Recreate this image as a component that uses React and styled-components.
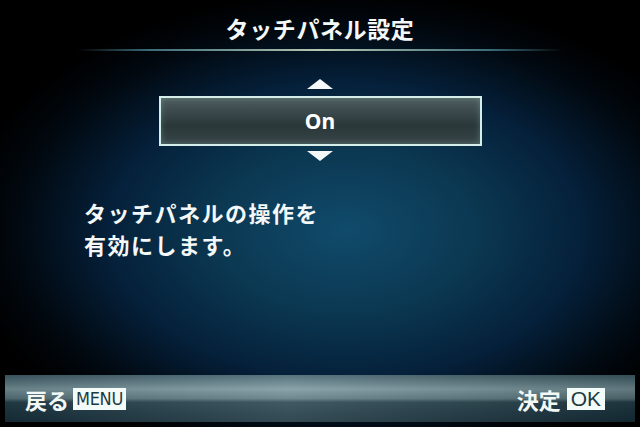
import React from 'react';
import { styled, createGlobalStyle } from 'styled-components';

const GlobalStyle = createGlobalStyle`
  html, body {
    margin: 0;
    padding: 0;
    background: #000;
  }
`;

const font = `'Noto Sans CJK JP', 'Noto Sans', sans-serif`;

const Screen = styled.div`
  width: 640px;
  height: 427px;
  display: flex;
  flex-direction: column;
  overflow: hidden;
  font-family: ${font};
  color: #f4f8f8;
  background:
    radial-gradient(ellipse 60% 56% at 54% 54%, #104b6b 0%, #0b3751 35%, #05203a 62%, #01080f 86%, #000 100%);
`;

const Title = styled.h1`
  margin: 0;
  padding-top: 14px;
  font-size: 23px;
  line-height: 28px;
  font-weight: 700;
  text-align: center;
  letter-spacing: 0.6px;
`;

const Rule = styled.div`
  width: 486px;
  height: 2px;
  margin: 7px auto 0;
  background: linear-gradient(
    90deg,
    rgba(60, 110, 130, 0) 0%,
    #3b6c7a 15%,
    #b8c8b0 50%,
    #3b6c7a 85%,
    rgba(60, 110, 130, 0) 100%
  );
`;

const Selector = styled.div`
  margin-top: 28px;
  display: flex;
  flex-direction: column;
  align-items: center;
`;

const Arrow = styled.svg`
  display: block;
  width: 26px;
  height: 10px;
  margin: ${(p) => (p.$down ? '5px 0 0' : '0 0 7px')};
`;

const ValueBox = styled.div`
  width: 319px;
  height: 46px;
  border: 2px solid #d6eeea;
  display: flex;
  align-items: center;
  justify-content: center;
  background: linear-gradient(
    180deg,
    #4e5c5e 0%,
    #3b494c 30%,
    #2a3739 60%,
    #384548 100%
  );
  box-shadow: inset 0 0 6px rgba(150, 200, 200, 0.35);
`;

const Value = styled.span`
  font-family: 'Noto Sans', 'DejaVu Sans', sans-serif;
  font-size: 21px;
  font-weight: 700;
  color: #ffffff;
`;

const Description = styled.p`
  margin: 35px 0 0;
  padding-left: 84px;
  font-size: 22px;
  line-height: 32px;
  font-weight: 700;
  letter-spacing: 1.5px;
`;

const Spacer = styled.div`
  flex: 1;
`;

const Footer = styled.div`
  margin: 0 5px 5px;
  height: 47px;
  padding: 0 30px 0 20px;
  display: flex;
  align-items: center;
  justify-content: space-between;
  background:
    linear-gradient(90deg, rgba(0, 0, 0, 0.15) 0%, rgba(255, 255, 255, 0.12) 45%, rgba(0, 0, 0, 0.2) 100%),
    linear-gradient(
      180deg,
      #3f5f6a 0%,
      #7a969e 30%,
      #5b7880 50%,
      #26424d 58%,
      #1d3844 80%,
      #17303b 100%
    );
`;

const Action = styled.div`
  display: flex;
  align-items: center;
  gap: ${(p) => p.$gap || 4}px;
  font-size: 22px;
  font-weight: 700;
  color: #f2f8f6;
`;

const Key = styled.span`
  display: inline-flex;
  align-items: center;
  justify-content: center;
  height: 22px;
  padding: 0 ${(p) => (p.$wide ? 3 : 4)}px;
  background: #f2fbf8;
  color: #1c3a40;
  font-family: ${(p) =>
    p.$wide
      ? `'Liberation Sans Narrow', 'DejaVu Sans Condensed', 'Liberation Sans', sans-serif`
      : `'Liberation Sans', sans-serif`};
  font-size: ${(p) => (p.$wide ? 18 : 21)}px;
  font-weight: 400;
  letter-spacing: ${(p) => (p.$wide ? -0.3 : 0)}px;
  line-height: 22px;
`;

export default function App() {
  return (
    <>
      <GlobalStyle />
      <Screen>
        <Title>タッチパネル設定</Title>
        <Rule />
        <Selector>
          <Arrow viewBox="0 0 26 10">
            <polygon points="13,0 26,10 0,10" fill="#f4f8f8" />
          </Arrow>
          <ValueBox>
            <Value>On</Value>
          </ValueBox>
          <Arrow $down viewBox="0 0 26 10">
            <polygon points="0,0 26,0 13,10" fill="#f4f8f8" />
          </Arrow>
        </Selector>
        <Description>
          タッチパネルの操作を
          <br />
          有効にします。
        </Description>
        <Spacer />
        <Footer>
          <Action>
            戻る<Key $wide>MENU</Key>
          </Action>
          <Action $gap={6}>
            決定<Key>OK</Key>
          </Action>
        </Footer>
      </Screen>
    </>
  );
}
